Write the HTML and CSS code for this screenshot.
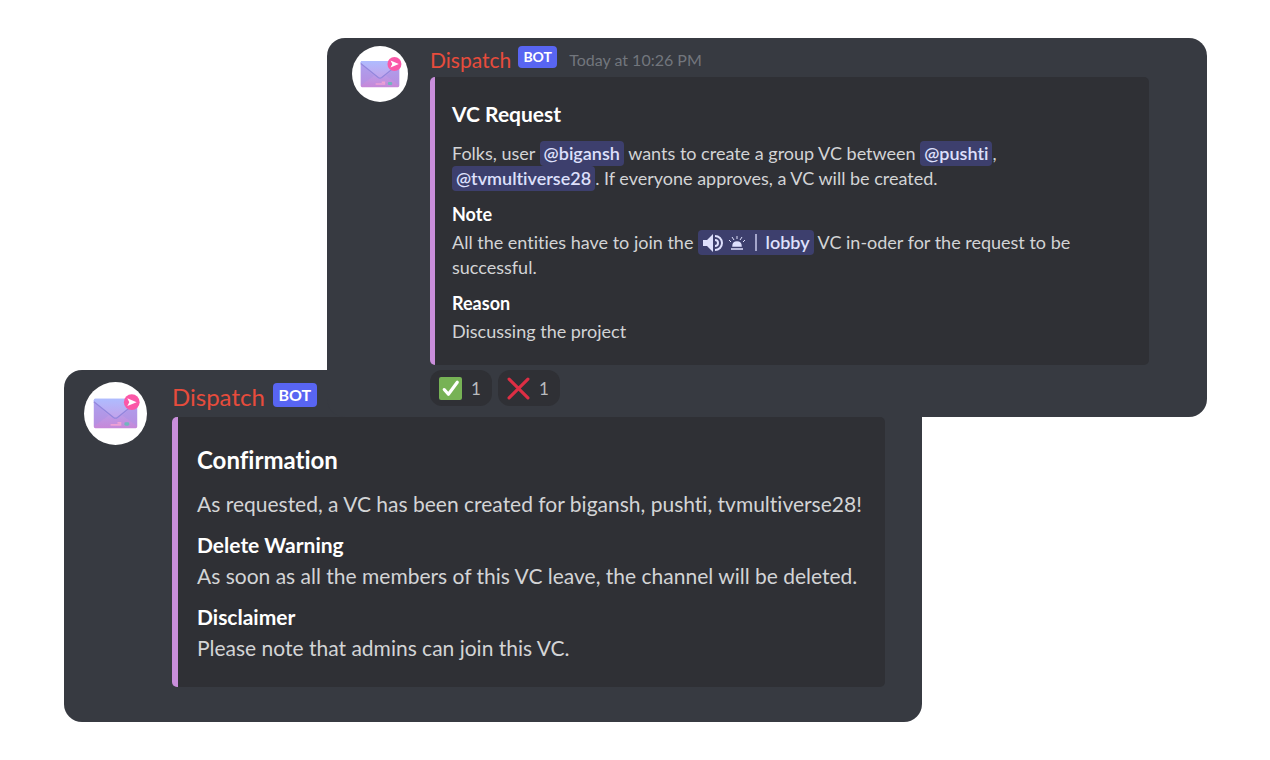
FILE: index.html
```
<!DOCTYPE html>
<html lang="en">
<head>
<meta charset="utf-8">
<title>Dispatch</title>
<link rel="stylesheet" href="styles.css">
</head>
<body>
<svg width="0" height="0" class="defs" aria-hidden="true">
  <defs>
    <linearGradient id="env" x1="0" y1="0" x2="0" y2="1"><stop offset="0" stop-color="#adb4fa"/><stop offset="1" stop-color="#c687d8"/></linearGradient>
    <linearGradient id="flap" x1="0" y1="0" x2="0" y2="1"><stop offset="0" stop-color="#aebcff"/><stop offset="1" stop-color="#c3a2ea"/></linearGradient>
    <symbol id="avatar" viewBox="0 0 64 64">
      <circle cx="32" cy="32" r="32" fill="#fff"/>
      <rect x="10" y="17" width="44" height="30" rx="1.5" fill="url(#env)"/>
      <path d="M10 20L25 34L10 45ZM54 20L39 34L54 45Z" fill="#a992e6" opacity=".5"/>
      <path d="M10 18.500Q10 17 11.500 17H52.500Q54 17 54 18.500V20L34 36Q32 37.500 30 36L10 20Z" fill="url(#flap)"/>
      <path d="M10 20L30 36Q32 37.500 34 36L54 20" fill="none" stroke="#9286dd" stroke-width="1.300"/>
      <path d="M27 43.500H37V41.500H34" fill="none" stroke="#eda0d5" stroke-width="1.800"/>
      <rect x="41" y="41" width="5" height="3.500" rx="1.500" fill="#72b5bd"/>
      <circle cx="48.500" cy="20.500" r="8" fill="#fb58a8"/>
      <path d="M44 16.500L53.500 20.500L44 24.500L46 20.500Z" fill="#fff"/>
    </symbol>
  </defs>
</svg>
<main class="stage">
  <article class="message message-request">
    <svg class="avatar" role="img" aria-label="Dispatch avatar"><use href="#avatar"/></svg>
    <div class="content">
      <header class="header"><span class="name">Dispatch</span><span class="bot">BOT</span><time class="time">Today at 10:26 PM</time></header>
      <section class="embed">
        <h2 class="title">VC Request</h2>
        <p class="text">Folks, user <a class="mention" href="#bigansh">@bigansh</a> wants to create a group VC between <a class="mention" href="#pushti">@pushti</a>,<br><a class="mention" href="#tvmultiverse28">@tvmultiverse28</a>. If everyone approves, a VC will be created.</p>
        <h3 class="label">Note</h3>
        <p class="text">All the entities have to join the <a class="mention" href="#lobby"><svg class="channel-icon" viewBox="0 0 56 20" aria-hidden="true"><path d="M1 7H5L11 1V19L5 13H1Z" fill="#dee0fc"/><path d="M13 3A7 7 0 0 1 13 17M13 7A3 3 0 0 1 13 13" fill="none" stroke="#dee0fc" stroke-width="2"/><path d="M29 16H41M31 13Q31 9 35 9Q39 9 39 13Z" fill="#dee0fc" stroke="#dee0fc" stroke-width="1.500"/><path d="M35 3V6M30 4L32 7M40 4L38 7M27 7L29 9M43 7L41 9" stroke="#dee0fc"/><path d="M54 1V18" stroke="#c8caeb" stroke-width="1.500"/></svg> lobby</a> VC in-oder for the request to be<br>successful.</p>
        <h3 class="label">Reason</h3>
        <p class="text">Discussing the project</p>
      </section>
      <div class="reactions">
        <button class="reaction" type="button" aria-label="Check mark, 1"><svg class="emoji" viewBox="0 0 22 22"><rect width="22" height="22" rx="2" fill="#77b255"/><path d="M5 12L9 16.500L17.500 5" fill="none" stroke="#fff" stroke-width="3" stroke-linecap="round" stroke-linejoin="round"/></svg><span>1</span></button>
        <button class="reaction" type="button" aria-label="Cross mark, 1"><svg class="emoji" viewBox="0 0 22 22"><path d="M2 2L20 20M20 2L2 20" stroke="#dd2e44" stroke-width="3" stroke-linecap="round"/></svg><span>1</span></button>
      </div>
    </div>
  </article>
  <article class="message message-confirm">
    <svg class="avatar" role="img" aria-label="Dispatch avatar"><use href="#avatar"/></svg>
    <div class="content">
      <header class="header"><span class="name">Dispatch</span><span class="bot">BOT</span></header>
      <section class="embed">
        <h2 class="title">Confirmation</h2>
        <p class="text">As requested, a VC has been created for bigansh, pushti, tvmultiverse28!</p>
        <h3 class="label">Delete Warning</h3>
        <p class="text">As soon as all the members of this VC leave, the channel will be deleted.</p>
        <h3 class="label">Disclaimer</h3>
        <p class="text">Please note that admins can join this VC.</p>
      </section>
    </div>
  </article>
</main>
</body>
</html>
```
FILE: styles.css
```
* { box-sizing: border-box; }
body { margin: 0; background: #fff; font-family: Lato, "Noto Sans", sans-serif; font-variant-ligatures: none; }
.defs { position: absolute; }
.stage { display: flex; flex-direction: column; padding: 38px 63px 38px 64px; }
.message { display: flex; align-items: flex-start; background: #373a41; border-radius: 18px; color: #d3d4d6; }
.content { flex: 1; min-width: 0; }
.avatar { flex: none; }
.header { display: flex; align-items: center; }
.name { color: #e74c3c; }
.bot { background: #5865f2; color: #fff; font-weight: 700; border-radius: 4px; text-align: center; }
.time { color: #72767d; font-size: 16px; }
.embed { background: #2f3035; border-radius: 5px; border-left: 5px solid #c98edb; }
.title, .label, .text { margin: 0; }
.title, .label { color: #fff; font-weight: 700; font-size: inherit; }
.mention { padding: 1px 4px 2px; border-radius: 4px; background: #3d3f6d; color: #dee0fc; font-weight: 600; text-decoration: none; }
.channel-icon { width: 56px; height: 20px; margin-right: 3px; vertical-align: -4px; }

.message-request { position: relative; z-index: 1; margin-left: 263px; padding: 8px 58px 11px 25px; gap: 22px; font-size: 18px; line-height: 25px; }
.message-request .avatar { width: 56px; height: 56px; }
.message-request .header { height: 31px; padding-bottom: 5px; }
.message-request .name { font-size: 21px; }
.message-request .bot { width: 39px; margin: 0 12px 4px 7px; font-size: 14px; line-height: 22px; }
.message-request .embed { padding: 24px 54px 21px 17px; }
.message-request .title { font-size: 21px; margin-bottom: 15px; }
.message-request .label { margin: 11px 0 3px; }

.reactions { display: flex; gap: 6px; margin-top: 5px; }
.reaction { display: flex; align-items: center; gap: 9px; height: 36px; padding: 0 11px 0 9px; border: 0; border-radius: 12px; background: #2f3035; color: #b9bbbe; font: 17px Lato, "Noto Sans", sans-serif; }
.emoji { width: 23px; height: 23px; }

.message-confirm { margin: -47px 285px 0 0; padding: 12px 37px 35px 20px; gap: 25px; font-size: 21px; line-height: 28px; }
.message-confirm .avatar { width: 63px; height: 63px; }
.message-confirm .header { height: 35px; padding-bottom: 5px; }
.message-confirm .name { font-size: 24px; }
.message-confirm .bot { width: 44px; margin: 0 0 5px 8px; font-size: 16px; line-height: 24px; }
.message-confirm .embed { padding: 29px 19px 25px 19px; border-left-width: 6px; }
.message-confirm .title { font-size: 24px; margin-bottom: 16px; }
.message-confirm .label { margin: 13px 0 3px; }
```
